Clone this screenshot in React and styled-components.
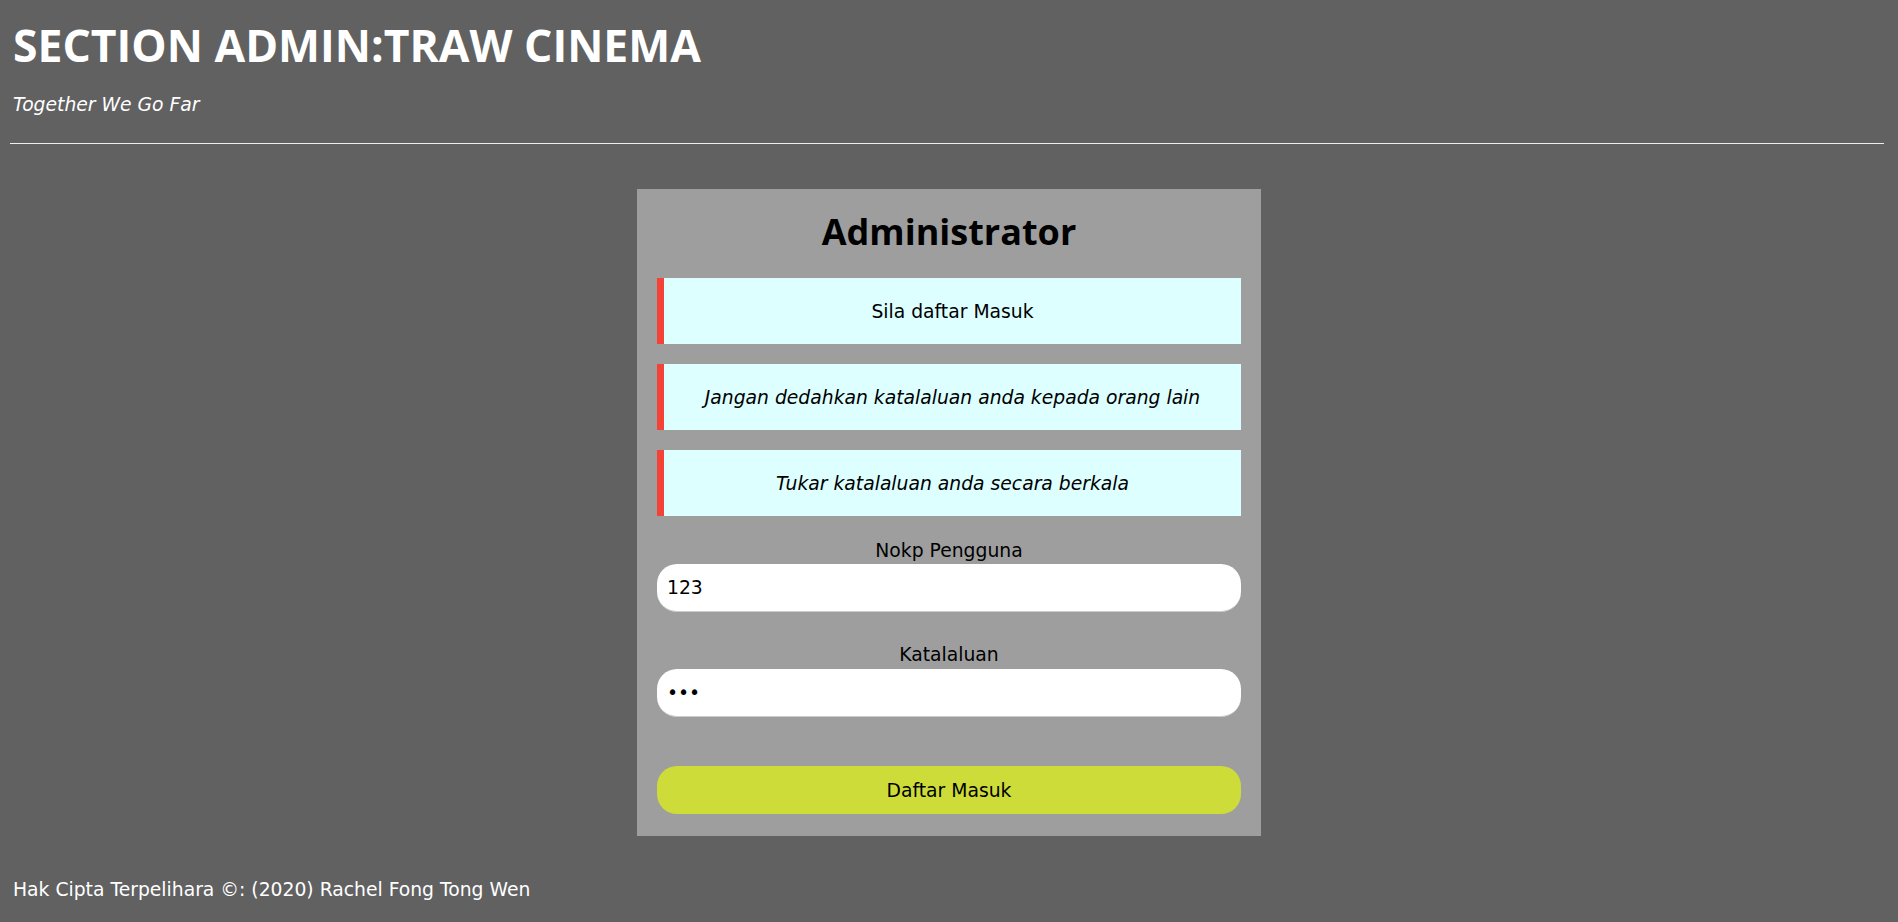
import styled, { createGlobalStyle } from "styled-components";

const GlobalStyle = createGlobalStyle`
  html, body {
    margin: 0;
    padding: 0;
    background-color: #616161;
  }
  body {
    font-family: "DejaVu Sans", Verdana, sans-serif;
    font-size: 18.75px;
  }
  * {
    box-sizing: border-box;
  }
`

const Page = styled.div`
  min-height: 922px;
  color: #fff;
  display: flex;
  flex-direction: column;
`

const Header = styled.header`
  display: flex;
  flex-direction: column;
  padding: 0 14px 0 13px;
`

const SiteTitle = styled.h1`
  margin: 18px 0 0;
  font-family: "Open Sans", "Segoe UI", sans-serif;
  font-size: 44.5px;
  line-height: 54px;
  font-weight: 700;
  color: #fff;
`

const Tagline = styled.p`
  margin: 19px 0 0;
  line-height: 28px;
  font-style: italic;
`

const Rule = styled.hr`
  margin: 24px 14px 0 10px;
  height: 0;
  border: 0;
  border-top: 1px solid #eee;
`

const Card = styled.main`
  width: 624px;
  margin: 45px auto 0;
  padding: 0 20px 22px;
  background-color: #9e9e9e;
  color: #000;
  display: flex;
  flex-direction: column;
`

const CardTitle = styled.h2`
  margin: 21px 0 0;
  font-family: "Open Sans", "Segoe UI", sans-serif;
  font-size: 36px;
  line-height: 44px;
  font-weight: 700;
  text-align: center;
`

const Notices = styled.div`
  display: flex;
  flex-direction: column;
  gap: 20px;
  margin-top: 24px;
`

const Notice = styled.div`
  height: 66px;
  display: flex;
  align-items: center;
  justify-content: center;
  padding: 0 20px;
  background-color: #ddffff;
  border-left: 7px solid #f44336;
  font-style: ${(p) => (p.$italic ? "italic" : "normal")};
`

const Field = styled.label`
  display: flex;
  flex-direction: column;
  margin-top: ${(p) => p.$gap}px;
  span {
    text-align: center;
    line-height: 26px;
  }
`

const Input = styled.input`
  width: 100%;
  height: 48px;
  margin-top: ${(p) => p.$offset || 0}px;
  padding: 0 10px;
  border: none;
  border-bottom: 1px solid #ccc;
  border-radius: 20px;
  background-color: #fff;
  font-family: inherit;
  font-size: 18.75px;
  color: #000;
  outline: none;
`

const SubmitButton = styled.button`
  margin-top: 49px;
  width: 100%;
  height: 48px;
  border: none;
  border-radius: 20px;
  background-color: #cddc39;
  color: #000;
  font-family: inherit;
  font-size: 18.75px;
  cursor: pointer;
`

const Footer = styled.footer`
  margin-top: 40px;
  padding: 0 14px 0 13px;
  line-height: 28px;
`

export default function App() {
  return (
    <>
      <GlobalStyle />
      <Page>
        <Header>
          <SiteTitle>SECTION ADMIN:TRAW CINEMA</SiteTitle>
          <Tagline>Together We Go Far</Tagline>
        </Header>
        <Rule />
        <Card>
          <CardTitle>Administrator</CardTitle>
          <Notices>
            <Notice>Sila daftar Masuk</Notice>
            <Notice $italic>Jangan dedahkan katalaluan anda kepada orang lain</Notice>
            <Notice $italic>Tukar katalaluan anda secara berkala</Notice>
          </Notices>
          <Field $gap={22}>
            <span>Nokp Pengguna</span>
            <Input type="text" defaultValue="123" />
          </Field>
          <Field $gap={30}>
            <span>Katalaluan</span>
            <Input type="password" defaultValue="abc" $offset={1} />
          </Field>
          <SubmitButton type="submit">Daftar Masuk</SubmitButton>
        </Card>
        <Footer>Hak Cipta Terpelihara ©: (2020) Rachel Fong Tong Wen</Footer>
      </Page>
    </>
  );
}
